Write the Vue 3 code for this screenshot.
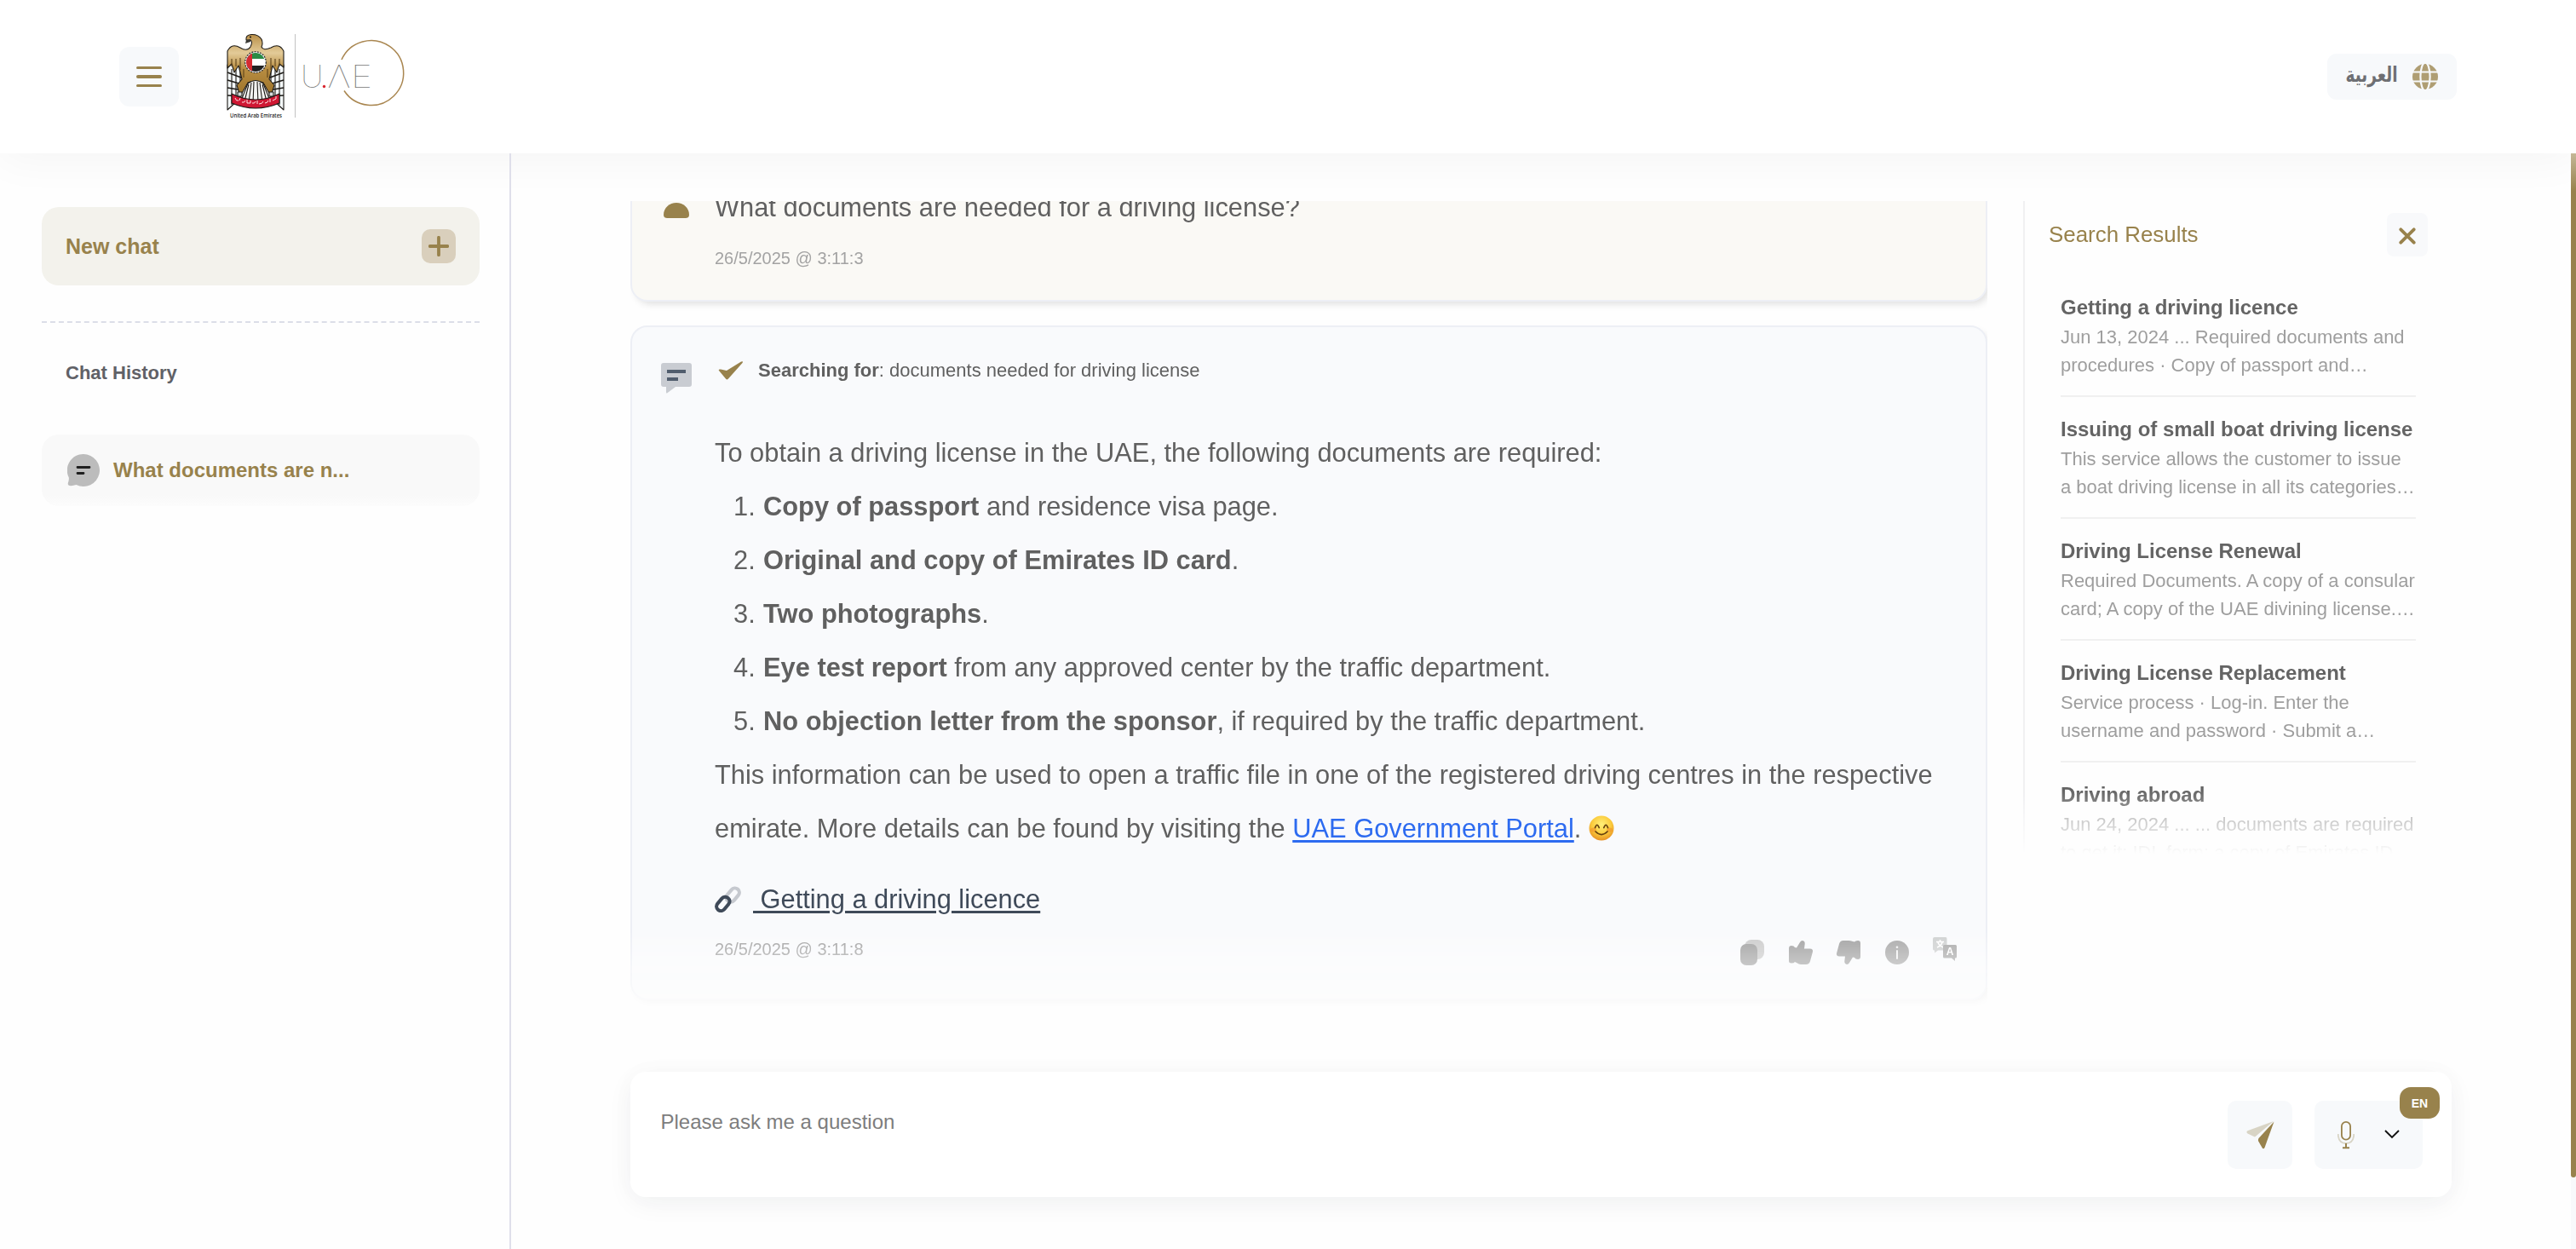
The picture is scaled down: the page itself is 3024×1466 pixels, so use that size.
<script setup>
const steps = [
  { strong: 'Copy of passport', rest: ' and residence visa page.' },
  { strong: 'Original and copy of Emirates ID card', rest: '.' },
  { strong: 'Two photographs', rest: '.' },
  { strong: 'Eye test report', rest: ' from any approved center by the traffic department.' },
  { strong: 'No objection letter from the sponsor', rest: ', if required by the traffic department.' },
]

const results = [
  { title: 'Getting a driving licence', lines: ['Jun 13, 2024 ... Required documents and', 'procedures · Copy of passport and…'] },
  { title: 'Issuing of small boat driving license', lines: ['This service allows the customer to issue', 'a boat driving license in all its categories…'] },
  { title: 'Driving License Renewal', lines: ['Required Documents. A copy of a consular', 'card; A copy of the UAE divining license.…'] },
  { title: 'Driving License Replacement', lines: ['Service process · Log-in. Enter the', 'username and password · Submit a…'] },
  { title: 'Driving abroad', lines: ['Jun 24, 2024 ... ... documents are required', 'to get it; IDL form; a copy of Emirates ID'] },
]
</script>

<template>
  <div class="page">
    <header class="header">
      <div class="brand">
        <button class="menu" aria-label="Menu">
          <span class="bar"></span><span class="bar"></span><span class="bar"></span>
        </button>
        <svg class="logo" width="220" height="108" viewBox="264 35 220 108">
          <defs>
            <linearGradient id="gold" x1="0" y1="0" x2="0" y2="1">
              <stop offset="0" stop-color="#b98f48" />
              <stop offset=".3" stop-color="#e3cb98" />
              <stop offset=".55" stop-color="#b88d42" />
              <stop offset="1" stop-color="#9c7228" />
            </linearGradient>
            <clipPath id="disc"><circle cx="300" cy="72" r="11" /></clipPath>
          </defs>
          <g stroke="#1d1a16" stroke-width="1.1" stroke-linejoin="round">
            <path d="M267 75 L283 72 L289 92 L281 115 L267 128 Z" fill="#f4f8f9" />
            <path d="M333 75 L317 72 L311 92 L319 115 L333 128 Z" fill="#f4f8f9" />
            <path d="M267 84 l16 6 M267 93 l17 5 M267 102 l18 3 M267 111 l16 1 M333 84 l-16 6 M333 93 l-17 5 M333 102 l-18 3 M333 111 l-16 1" fill="none" stroke-width="1.600" />
            <path d="M272 80 v42 M277 80 v37 M282 82 v30 M328 80 v42 M323 80 v37 M318 82 v30" fill="none" />
            <path d="M294 54 Q297 48 294 46 L289 46 Q288 40 295 39.500 Q303 39 307 45 Q309 50 307 54 Q309 59 318 55 Q328 49 333 59 V78 L328 74 L325 84 L320 76 L316 92 L322 99 L318 112 L309 96 Q300 92 291 96 L282 112 L278 99 L284 92 L280 76 L275 84 L272 74 L267 79 V59 Q272 49 282 55 Q290 60 294 54Z" fill="url(#gold)" />
            <path d="M272 68 v9 M277 68 v9 M282 67 v14 M286 80 v10 M328 68 v9 M323 68 v9 M318 67 v14 M314 80 v10" fill="none" stroke="#5d431b" />
            <path d="M291 97 Q300 90 309 97 L317 117 Q300 124 283 117Z" fill="#f3f3f1" />
            <path d="M292 98 L287 118 M295 96 L292 119 M298 95 L297 120 M302 95 L303 120 M305 96 L308 119 M308 98 L313 118" fill="none" />
            <path d="M279 107 h5 v5 h-5Z M316 107 h5 v5 h-5Z" fill="#d7dddd" />
            <path d="M272 109 Q300 123 328 109 V120 Q300 132 272 120Z" fill="#cf1733" />
          </g>
          <path d="M289 46 l5 -1 v3 l-6 2Z" fill="#3a3a36" />
          <circle cx="294" cy="42.500" r="1" fill="#111" />
          <g fill="none" stroke="#ffe7e9" stroke-width="1">
            <path d="M276 114 q1 4 4 3 M281 117 l1 -3 M284 119 q3 1 4 -2 M290 116 v4 h4 v-3 M296 120 q3 1 4 -2 M302 117 v4 M304 121 q4 0 5 -3 M311 120 q3 0 4 -3 M317 115 v4 M320 117 l4 -2 M324 112 v3" />
          </g>
          <circle cx="300" cy="72" r="12.300" fill="#fff" stroke="#333" stroke-width="1.300" stroke-dasharray="2 1.300" />
          <g clip-path="url(#disc)">
            <rect x="289" y="61" width="22" height="8" fill="#2a8b45" />
            <rect x="289" y="68" width="22" height="8" fill="#fff" />
            <rect x="289" y="76" width="22" height="8" fill="#222" />
            <rect x="289" y="61" width="7" height="22" fill="#d52a31" />
          </g>
          <text x="300.500" y="136.800" class="caption" text-anchor="middle" textLength="61" lengthAdjust="spacingAndGlyphs">United Arab Emirates</text>
          <path d="M346.500 39 V137" stroke="#c2c2c2" stroke-width="1" />
          <g class="wordmark">
            <text x="353" y="102">U</text>
            <text x="384.500" y="102" textLength="27" lengthAdjust="spacingAndGlyphs">Λ</text>
            <text x="412" y="102" textLength="25" lengthAdjust="spacingAndGlyphs">E</text>
          </g>
          <circle cx="380.500" cy="100.500" r="1.700" fill="#d8262f" />
          <path d="M401 69 A38 38 0 1 1 404 105.500" fill="none" stroke="#a98650" stroke-width="1.500" />
        </svg>
      </div>
      <button class="lang">
        <svg width="64" height="44" viewBox="0 0 64 44">
          <text class="lang-name" lang="ar" x="32" y="28" text-anchor="middle" textLength="61" lengthAdjust="spacingAndGlyphs">العربية</text>
        </svg>
        <svg width="30" height="30" viewBox="0 0 30 30">
          <circle cx="15" cy="15" r="15" fill="#af9e73" />
          <g fill="none" stroke="#f7f9fb" stroke-width="2.200">
            <path d="M0 9.500 H30 M0 20.500 H30" />
            <ellipse cx="15" cy="15" rx="5.600" ry="16.500" />
          </g>
        </svg>
      </button>
    </header>

    <div class="body">
      <aside class="sidebar">
        <button class="new-chat">
          <span>New chat</span>
          <span class="plus">
            <svg width="24" height="24" viewBox="0 0 24 24"><path d="M12 1.700 V22.300 M1.700 12 H22.300" stroke="#98824c" stroke-width="3.800" stroke-linecap="round" /></svg>
          </span>
        </button>
        <hr class="dash" />
        <h2 class="history-title">Chat History</h2>
        <div class="history-item">
          <svg width="38" height="38" viewBox="0 0 38 38">
            <path d="M19 0 A19 19 0 1 1 10.500 36 Q6 37.500 2.500 37 Q0 36.500 1 33.500 Q2.200 30 1.800 27.500 A19 19 0 0 1 19 0Z" fill="#bcbcbc" />
            <path d="M12 15.500 H26 M12 22.500 H19" stroke="#1f1f1f" stroke-width="2.800" stroke-linecap="round" />
          </svg>
          <span>What documents are n...</span>
        </div>
      </aside>

      <main class="main">
        <div class="columns">
          <section class="chat">
            <article class="card question">
              <svg class="avatar" width="30" height="40" viewBox="0 0 30 40">
                <circle cx="15" cy="9" r="8" fill="#98824c" />
                <path d="M15 22 C23 22 30 28 30 36 Q30 40 26 40 H4 Q0 40 0 36 C0 28 7 22 15 22Z" fill="#98824c" />
              </svg>
              <div class="content">
                <p class="prose">What documents are needed for a driving license?</p>
                <time class="stamp">26/5/2025 @ 3:11:3</time>
              </div>
            </article>

            <article class="card answer">
              <svg class="bot" width="36" height="36" viewBox="0 0 36 36">
                <path d="M3 0 H33 Q36 0 36 3 V25 Q36 28 33 28 H17 L7 35.500 Q6 36 6 34 V28 H3 Q0 28 0 25 V3 Q0 0 3 0Z" fill="#c9ccd2" />
                <path d="M7 10 H29 M7 19 H20" stroke="#515d6d" stroke-width="3.800" />
              </svg>
              <div class="content">
                <p class="searching">
                  <svg width="30" height="22" viewBox="0 0 30 22"><path d="M1 11 Q0 9 3 9.500 L10 11 L27 .5 Q30 -.5 28.500 2 L12 20.500 Q10 22.500 8.500 20Z" fill="#98824c" /></svg>
                  <span><b>Searching for</b>: documents needed for driving license</span>
                </p>
                <div class="prose">
                  <p>To obtain a driving license in the UAE, the following documents are required:</p>
                  <ol>
                    <li v-for="(s, i) in steps" :key="i"><span class="num">{{ i + 1 }}.</span><b>{{ s.strong }}</b>{{ s.rest }}</li>
                  </ol>
                  <p>
                    This information can be used to open a traffic file in one of the registered driving centres in the respective<br />emirate. More details can be found by visiting the <a class="portal">UAE Government Portal</a>.
                    <svg class="smile" width="30" height="30" viewBox="0 0 30 30">
                      <defs>
                        <radialGradient id="face" cx=".5" cy=".35" r=".65">
                          <stop offset="0" stop-color="#fff07a" /><stop offset=".6" stop-color="#fbcb3c" /><stop offset="1" stop-color="#e79124" />
                        </radialGradient>
                      </defs>
                      <circle cx="15" cy="15" r="14.500" fill="url(#face)" />
                      <ellipse cx="5.500" cy="17" rx="3.500" ry="2.600" fill="#f0912f" opacity=".6" />
                      <ellipse cx="24.500" cy="17" rx="3.500" ry="2.600" fill="#f0912f" opacity=".6" />
                      <path d="M7.500 14.500 Q9.800 8 12.200 14.500 M17.800 14.500 Q20.200 8 22.500 14.500 M8 19 Q15 26 22 19" fill="none" stroke="#65400f" stroke-width="1.700" stroke-linecap="round" />
                    </svg>
                  </p>
                </div>
                <p class="source">
                  <svg width="31" height="31" viewBox="0 0 30 30" fill="none" stroke-width="4">
                    <rect x="15.500" y="1.500" width="10" height="17.500" rx="5" transform="rotate(40 20.500 10.250)" stroke="#c6c9cf" />
                    <rect x="4.500" y="11.500" width="10" height="17.500" rx="5" transform="rotate(40 9.500 20.250)" stroke="#3f4a59" />
                  </svg>
                  <a>&nbsp;Getting a driving licence</a>
                </p>
                <footer class="foot">
                  <time class="stamp">26/5/2025 @ 3:11:8</time>
                  <div class="actions">
                    <svg width="28" height="30" viewBox="0 0 28 30">
                      <rect x="5" y="0" width="23" height="23" rx="8" fill="#ccc" />
                      <rect x="0" y="5" width="20" height="25" rx="7" fill="#a1a1a1" />
                    </svg>
                    <svg width="28" height="28" viewBox="0 0 28 28" fill="#a1a1a1">
                      <path d="M0 9 Q0 6 3 6 Q6 6 7 8 L9 8.500 L13 2 Q14 0 16 0 Q19 .5 18.700 4 L18 9.500 H25 Q28.500 9.500 28 13 L25 24 Q24 28 20 28 H14 Q12 28 9 26 L7 25 Q6 26.500 3 26.500 Q0 26.500 0 24Z" />
                    </svg>
                    <svg width="28" height="28" viewBox="0 0 28 28" fill="#a1a1a1">
                      <path transform="rotate(180 14 14)" d="M0 9 Q0 6 3 6 Q6 6 7 8 L9 8.500 L13 2 Q14 0 16 0 Q19 .5 18.700 4 L18 9.500 H25 Q28.500 9.500 28 13 L25 24 Q24 28 20 28 H14 Q12 28 9 27 L7 26.500 Q6 28 3 28 Q0 28 0 25Z" />
                    </svg>
                    <svg width="28" height="28" viewBox="0 0 28 28">
                      <circle cx="14" cy="14" r="14" fill="#a8a8a8" />
                      <path d="M14 12 V21" stroke="#f3f3f3" stroke-width="2" stroke-linecap="round" />
                      <circle cx="14" cy="7.800" r="1.300" fill="#f3f3f3" />
                    </svg>
                    <svg class="translate" width="28" height="28" viewBox="0 0 28 28">
                      <path d="M2 0 H15 Q16.500 0 16.500 2 V14 Q16.500 15.500 15 15.500 H6 L2 18.500 V15.500 Q0 15.500 0 14 V2 Q0 0 2 0Z" fill="#cfd1d1" />
                      <path d="M4 5.500 H13 M8.500 3 V5.500 M5 12 Q10 10 11 6 M6 6 Q7 10 12.500 12" fill="none" stroke="#fff" stroke-width="1.600" />
                      <path d="M13.500 9 H26.500 Q28 9 28 10.500 V23 Q28 24.500 26.500 24.500 H26 V28 L22 24.500 H13.500 Q12 24.500 12 23 V10.500 Q12 9 13.500 9Z" fill="#a9a9a9" />
                      <text x="20" y="21" text-anchor="middle" class="glyph">A</text>
                    </svg>
                  </div>
                </footer>
              </div>
            </article>
          </section>

          <section class="panel">
            <div class="panel-head">
              <h2>Search Results</h2>
              <button class="close" aria-label="Close">
                <svg width="20" height="20" viewBox="0 0 20 20"><path d="M2.300 2.300 L17.700 17.700 M17.700 2.300 L2.300 17.700" stroke="#98824c" stroke-width="3.800" stroke-linecap="round" /></svg>
              </button>
            </div>
            <ul>
              <li v-for="r in results" :key="r.title">
                <h3>{{ r.title }}</h3>
                <p v-for="l in r.lines" :key="l">{{ l }}</p>
              </li>
            </ul>
          </section>
        </div>

        <form class="composer">
          <span class="placeholder">Please ask me a question</span>
          <div class="tools">
            <span class="tool send">
              <svg width="33" height="33" viewBox="0 0 33 33">
                <path d="M32 0 L2 11 Q-1 12.500 1.500 14.500 L10 18.500Z" fill="#d8d4c5" />
                <path d="M32.500 .5 L14.500 20 Q13.500 22 14.200 23.500 L18.500 31 Q20 33.500 21.500 31Z" fill="#98824c" />
              </svg>
            </span>
            <span class="tool voice">
              <svg width="20" height="33" viewBox="0 0 20 33" fill="none">
                <path d="M.8 15 V17 Q2 26 10 26 Q18 26 19.200 17 V15" stroke="#d8d4c5" stroke-width="1.800" />
                <rect x="4.900" y=".9" width="10.200" height="20.700" rx="5.100" stroke="#98824c" stroke-width="1.800" />
                <path d="M10 26 V31 M6 31.300 H14" stroke="#98824c" stroke-width="2" />
              </svg>
              <svg width="18" height="11" viewBox="0 0 18 11"><path d="M1 1 L9 9 L17 1" fill="none" stroke="#111" stroke-width="1.900" /></svg>
              <span class="badge">EN</span>
            </span>
          </div>
        </form>
      </main>

      <div class="scroll"><div class="thumb"></div></div>
    </div>
  </div>
</template>

<style>
body {
  background: #fefefe;
}
</style>

<style scoped>
.page {
  width: 3024px;
  height: 1466px;
  overflow: hidden;
  display: flex;
  flex-direction: column;
  font-family: "Liberation Sans", Arial, sans-serif;
  color: #606060;
}
.page * {
  box-sizing: border-box;
}
h2, h3, p, ul, ol {
  margin: 0;
  padding: 0;
  list-style: none;
}
button {
  border: 0;
  padding: 0;
  font: inherit;
}
svg {
  display: block;
  flex: none;
}
.header {
  height: 180px;
  flex: none;
  padding: 0 140px;
  display: flex;
  justify-content: space-between;
  align-items: center;
  background: #fff;
  box-shadow: 0 6px 50px rgba(0, 0, 0, 0.045);
}
.brand {
  display: flex;
  align-items: center;
  gap: 54px;
}
.menu {
  width: 70px;
  height: 70px;
  border-radius: 12px;
  background: #f7f9fb;
  display: flex;
  flex-direction: column;
  align-items: center;
  justify-content: center;
  gap: 7px;
}
.bar {
  width: 30px;
  height: 3.4px;
  border-radius: 2px;
  background: #98824c;
}
.caption {
  font: 500 7px "Noto Sans", sans-serif;
  fill: #111;
}
.wordmark {
  font: 100 37px Inter, Lato, sans-serif;
  fill: #777;
}
.lang {
  width: 152px;
  height: 54px;
  border-radius: 11px;
  background: #f7f9fb;
  display: flex;
  align-items: center;
  justify-content: space-between;
  padding: 0 22px 0 20px;
}
.lang-name {
  font: bold 25px "DejaVu Sans", sans-serif;
  fill: #6e6f73;
}
.body {
  flex: 1;
  display: flex;
}
.sidebar {
  width: 600px;
  padding: 63px 35px 0 49px;
  border-right: 2px solid #dfdfea;
}
.new-chat {
  width: 514px;
  height: 92px;
  border-radius: 20px;
  background: #f3f2ec;
  color: #98824c;
  font-weight: bold;
  font-size: 25px;
  display: flex;
  align-items: center;
  justify-content: space-between;
  padding: 0 28px;
}
.plus {
  width: 40px;
  height: 40px;
  border-radius: 10px;
  background: #d9cfbc;
  display: flex;
  align-items: center;
  justify-content: center;
}
.dash {
  width: 514px;
  margin: 42px 0 0;
  border: 0;
  border-top: 2px dashed #dcdee8;
}
.history-title {
  margin: 42px 0 0 28px;
  font-size: 22px;
  line-height: 33px;
  color: #606167;
}
.history-item {
  width: 514px;
  height: 84px;
  margin-top: 56px;
  padding-left: 30px;
  border-radius: 20px;
  background: linear-gradient(#f9f9f9 85%, #fcfcfc);
  display: flex;
  align-items: center;
  gap: 16px;
  font-size: 24px;
  font-weight: bold;
  color: #98824c;
}
.main {
  width: 2418px;
  padding: 56px 0 0 140px;
}
.columns {
  height: 956px;
  display: flex;
}
.chat {
  width: 1593px;
  overflow: hidden;
  -webkit-mask-image: linear-gradient(#000 calc(100% - 100px), transparent);
  mask-image: linear-gradient(#000 calc(100% - 100px), transparent);
}
.card {
  width: 1593px;
  border: 2px solid #edeff5;
  border-radius: 20px;
  box-shadow: 4px 5px 9px -2px rgba(0, 0, 0, 0.12);
  display: flex;
}
.question {
  height: 161px;
  margin-top: -43px;
  padding: 17px 0 0 37px;
  background: #faf9f5;
}
.avatar {
  margin: 4px 30px 0 0;
}
.answer {
  height: 792px;
  margin-top: 28px;
  padding: 34px 34px 0 34px;
  background: #f9fafc;
}
.bot {
  margin: 8px 27px 0 0;
}
.content {
  flex: 1;
  min-width: 0;
}
.prose {
  font-size: 30.82px;
  line-height: 63px;
  white-space: nowrap;
}
.stamp {
  display: block;
  font-size: 20px;
  line-height: 30px;
  color: #a3a3a3;
}
.question .stamp {
  margin-top: 13px;
}
.searching {
  display: flex;
  align-items: center;
  gap: 17px;
  padding-left: 4px;
  margin-bottom: 49px;
  font-size: 22px;
  line-height: 33px;
}
ol {
  padding-left: 22px;
}
.num {
  display: inline-block;
  width: 35px;
}
.portal {
  color: #2d6bf0;
  text-decoration: underline;
  text-decoration-thickness: 3px;
  text-underline-offset: 3px;
}
.smile {
  display: inline-block;
  vertical-align: -4px;
}
.source {
  margin-top: 20px;
  display: flex;
  align-items: center;
  gap: 14px;
  font-size: 30.8px;
  line-height: 63px;
  color: #3f4a59;
}
.source a {
  text-decoration: underline;
  text-decoration-thickness: 3px;
  text-underline-offset: 3px;
}
.foot {
  margin-top: 12px;
  display: flex;
  justify-content: space-between;
}
.actions {
  display: flex;
  align-items: center;
  gap: 28.5px;
  height: 38px;
}
.translate {
  margin-bottom: 8px;
}
.glyph {
  font: bold 12px "Liberation Sans", sans-serif;
  fill: #fff;
}
.panel {
  width: 475px;
  height: 766px;
  margin-left: 42px;
  padding: 14px 0 0 28px;
  border-left: 2px solid #f0f0f2;
  overflow: hidden;
  -webkit-mask-image: linear-gradient(#000 calc(100% - 74px), transparent);
  mask-image: linear-gradient(#000 calc(100% - 74px), transparent);
}
.panel-head {
  display: flex;
  justify-content: space-between;
  align-items: center;
  height: 51px;
}
.panel h2 {
  font-size: 25.9px;
  font-weight: normal;
  color: #98824c;
}
.close {
  width: 48px;
  height: 51px;
  border-radius: 8px;
  background: #f8f9fb;
  display: flex;
  align-items: center;
  justify-content: center;
}
.close svg {
  margin-top: 2px;
}
.panel ul {
  margin: 22px 14px 0 14px;
}
.panel li {
  height: 143.1px;
  padding-top: 20px;
  border-bottom: 2px solid #f0f0f0;
}
.panel h3 {
  font-size: 24px;
  line-height: 36px;
  color: #646464;
  white-space: nowrap;
}
.panel li p {
  font-size: 22px;
  line-height: 33px;
  color: #9e9e9e;
  white-space: nowrap;
}
.composer {
  width: 2138px;
  height: 147px;
  margin-top: 66px;
  border-radius: 18px;
  background: #fff;
  box-shadow: 0 8px 30px rgba(20, 30, 60, 0.05), 0 0 36px rgba(0, 0, 0, 0.02);
  display: flex;
  justify-content: space-between;
  padding: 34px 34px 0 35.5px;
}
.placeholder {
  margin-top: 7px;
  font-size: 24px;
  line-height: 36px;
  color: #7d7d7d;
}
.tools {
  display: flex;
  gap: 26px;
}
.tool {
  height: 80px;
  border-radius: 10px;
  background: #f7f9fb;
  display: flex;
  align-items: center;
}
.send {
  width: 76px;
  justify-content: center;
}
.voice {
  position: relative;
  width: 127px;
  padding-left: 27px;
  gap: 35px;
}
.voice svg:nth-child(2) {
  margin-bottom: 2px;
}
.badge {
  position: absolute;
  top: -16px;
  right: -20px;
  width: 47px;
  height: 37px;
  border-radius: 13px;
  background: #98824c;
  color: #fff;
  font-size: 14px;
  font-weight: bold;
  line-height: 38px;
  text-align: center;
}
.scroll {
  width: 6px;
  background: #f8f9fb;
}
.thumb {
  height: 1202px;
  border-radius: 0 0 3px 3px;
  background: linear-gradient(#c4b797, #98824c 44px);
}
</style>
